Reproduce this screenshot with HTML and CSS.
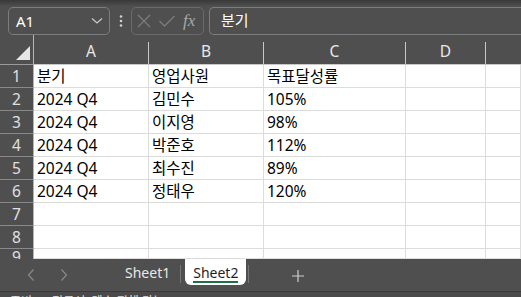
FILE: index.html
```html
<!DOCTYPE html>
<html lang="ko">
<head>
  <meta charset="UTF-8" />
  <title>Sheet2</title>
  <link rel="stylesheet" href="styles.css">
</head>
<body>
  <div class="app">
    <div class="formula-bar">
      <div class="name-box">
        <span>A1</span>
        <svg width="12" height="8" viewBox="0 0 12 8"><path d="M1 1.5 L6 6 L11 1.5" fill="none" stroke="#c8c8c8" stroke-width="1.3"/></svg>
      </div>
      <div class="dots">
        <svg width="4" height="14" viewBox="0 0 4 14"><circle cx="2" cy="2.5" r="1.3" fill="#d0d0d0"/><circle cx="2" cy="7" r="1.3" fill="#d0d0d0"/><circle cx="2" cy="11.5" r="1.3" fill="#d0d0d0"/></svg>
      </div>
      <div class="fx-box">
        <svg width="16" height="16" viewBox="0 0 16 16"><path d="M2 2 L14 14 M14 2 L2 14" stroke="#7c7c7c" stroke-width="1.3"/></svg>
        <svg width="18" height="16" viewBox="0 0 18 16"><path d="M1.5 8 L6.5 13 L16.5 3" fill="none" stroke="#7c7c7c" stroke-width="1.3"/></svg>
        <span class="fx">fx</span>
      </div>
      <div class="formula-input">분기</div>
    </div>

    <div class="grid">
      <div class="corner"><span class="tri"></span></div>
      <div class="colhead">A</div>
      <div class="colhead">B</div>
      <div class="colhead">C</div>
      <div class="colhead">D</div>
      <div class="colhead last"></div>

      <div class="rowhead">1</div><div class="cell">분기</div><div class="cell">영업사원</div><div class="cell">목표달성률</div><div class="cell"></div><div class="cell"></div>
      <div class="rowhead">2</div><div class="cell">2024 Q4</div><div class="cell">김민수</div><div class="cell">105%</div><div class="cell"></div><div class="cell"></div>
      <div class="rowhead">3</div><div class="cell">2024 Q4</div><div class="cell">이지영</div><div class="cell">98%</div><div class="cell"></div><div class="cell"></div>
      <div class="rowhead">4</div><div class="cell">2024 Q4</div><div class="cell">박준호</div><div class="cell">112%</div><div class="cell"></div><div class="cell"></div>
      <div class="rowhead">5</div><div class="cell">2024 Q4</div><div class="cell">최수진</div><div class="cell">89%</div><div class="cell"></div><div class="cell"></div>
      <div class="rowhead">6</div><div class="cell">2024 Q4</div><div class="cell">정태우</div><div class="cell">120%</div><div class="cell"></div><div class="cell"></div>
      <div class="rowhead">7</div><div class="cell"></div><div class="cell"></div><div class="cell"></div><div class="cell"></div><div class="cell"></div>
      <div class="rowhead">8</div><div class="cell"></div><div class="cell"></div><div class="cell"></div><div class="cell"></div><div class="cell"></div>
      <div class="rowhead partial">9</div><div class="cell"></div><div class="cell"></div><div class="cell"></div><div class="cell"></div><div class="cell"></div>
    </div>

    <div class="tabs">
      <div class="nav">
        <svg width="10" height="14" viewBox="0 0 10 14"><path d="M7.5 1.5 L2.5 7 L7.5 12.5" fill="none" stroke="#8a8a8a" stroke-width="1.2"/></svg>
        <svg width="10" height="14" viewBox="0 0 10 14"><path d="M2.5 1.5 L7.5 7 L2.5 12.5" fill="none" stroke="#8a8a8a" stroke-width="1.2"/></svg>
      </div>
      <div class="tab">Sheet1</div>
      <span class="sep"></span>
      <div class="tab active">Sheet2</div>
      <span class="sep"></span>
      <div class="add">
        <svg width="12" height="12" viewBox="0 0 12 12"><path d="M6 0 V12 M0 6 H12" stroke="#d0d0d0" stroke-width="1.2"/></svg>
      </div>
    </div>

    <div class="status">
      <span>준비</span>
      <span>접근성: 계속 진행 가능</span>
    </div>
  </div>
</body>
</html>
```

FILE: styles.css
```css
* {
  box-sizing: border-box;
  margin: 0;
  padding: 0;
}

body {
  background-color: #4f4f4f;
  font-family: "Noto Sans", "Noto Sans CJK KR", sans-serif;
  overflow: hidden;
}

.app {
  width: 521px;
  height: 297px;
  display: flex;
  flex-direction: column;
  overflow: hidden;
  background: linear-gradient(#393939 0, #4a4a4a 5px, #4f4f4f 6px);
}

.formula-bar {
  flex: 0 0 28px;
  display: flex;
  align-items: stretch;
  margin-top: 7px;
  padding-left: 8px;
}

.name-box {
  width: 102px;
  border: 1px solid #7d7d7d;
  border-radius: 5px;
  display: flex;
  align-items: center;
  justify-content: space-between;
  padding: 0 6px 0 7px;
  color: #ffffff;
  font-size: 15px;
}

.dots {
  width: 21px;
  display: flex;
  align-items: center;
  justify-content: center;
}

.fx-box {
  width: 73px;
  border: 1px solid #6a6a6a;
  border-radius: 5px;
  display: flex;
  align-items: center;
  gap: 6px;
  padding-left: 4px;
}

.fx {
  font-family: "Liberation Serif", serif;
  font-style: italic;
  font-size: 17px;
  color: #a8a8a8;
  margin-left: 1px;
}

.formula-input {
  flex: 1;
  margin-left: 5px;
  border: 1px solid #7d7d7d;
  border-right: none;
  border-radius: 5px 0 0 5px;
  color: #ffffff;
  font-size: 15px;
  padding-left: 11px;
  line-height: 25px;
}

.grid {
  flex: 0 0 224px;
  display: grid;
  grid-template-columns: 34px 115px 115px 142px 80px 1fr;
  grid-template-rows: 30px repeat(8, 23px) 1fr;
  overflow: hidden;
  background-color: #ffffff;
}

.corner,
.colhead {
  background-color: #4f4f4f;
  border-bottom: 1px solid #9a9a9a;
}

.corner {
  position: relative;
  border-right: 1px solid #b5b5b5;
}

.tri {
  position: absolute;
  right: 3px;
  bottom: 4px;
  width: 0;
  height: 0;
  border-left: 14px solid transparent;
  border-bottom: 14px solid #e6e6e6;
}

.colhead {
  color: #e8e8e8;
  font-size: 15.5px;
  display: flex;
  align-items: center;
  justify-content: center;
  padding-top: 3px;
  border-right: 1px solid #c8c8c8;
  border-image: linear-gradient(#4f4f4f 7px, #c8c8c8 7px) 0 1 1 0;
}

.colhead.last {
  border-right: none;
}

.rowhead {
  background-color: #4f4f4f;
  color: #e0e0e0;
  font-size: 15.5px;
  line-height: 22px;
  text-align: center;
  border-right: 1px solid #b5b5b5;
  border-bottom: 1px solid #8a8a8a;
  overflow: hidden;
}

.rowhead.partial {
  border-bottom: none;
  line-height: 17px;
}

.cell {
  border-right: 1px solid #dcdcdc;
  border-bottom: 1px solid #dcdcdc;
  color: #000000;
  font-size: 15.5px;
  padding-left: 3px;
  line-height: 22px;
  white-space: nowrap;
}

.tabs {
  flex: 0 0 32px;
  background-color: #4f4f4f;
  display: flex;
  align-items: flex-start;
}

.nav {
  display: flex;
  gap: 23px;
  padding: 9px 0 0 26px;
  width: 108px;
}

.tab {
  color: #e8e8e8;
  font-size: 14px;
  padding: 4px 8px 0;
  height: 26px;
}

.tabs .tab:nth-child(2) {
  margin-left: 9px;
}

.tab.active {
  background-color: #ffffff;
  color: #1f1f1f;
  border-radius: 0 0 6px 6px;
  position: relative;
  margin-left: 2px;
  width: 61px;
}

.tab.active::after {
  content: "";
  position: absolute;
  left: 8px;
  right: 8px;
  bottom: 2px;
  height: 2px;
  background-color: #1e7145;
}

.sep {
  width: 1px;
  height: 18px;
  background-color: #777777;
  margin: 6px 2px 0;
}

.add {
  padding: 6px 0 0 41px;
}

.status {
  flex: 0 0 6px;
  border-top: 1px solid #3a3a3a;
  background-color: #4a4a4a;
  color: #e0e0e0;
  font-size: 12px;
  padding: 1px 0 0 10px;
  display: flex;
  gap: 20px;
  line-height: 18px;
}
```
